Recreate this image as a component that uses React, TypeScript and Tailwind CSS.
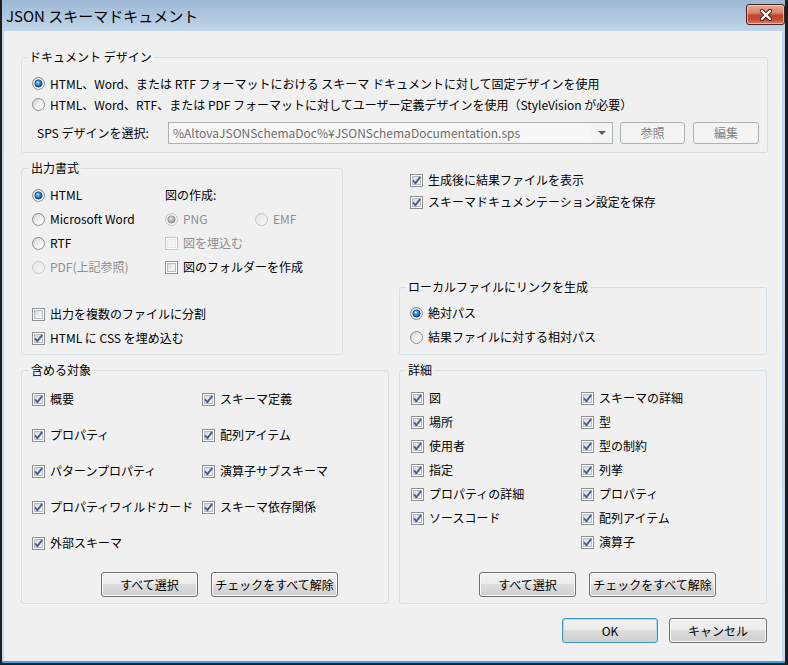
import React from 'react';

function Defs() {
  return (
    <svg width="0" height="0" className="absolute">
      <defs>
        <linearGradient id="rbg" x1="0" y1="0" x2="1" y2="1">
          <stop offset="0" stopColor="#cfcfcf" />
          <stop offset="0.6" stopColor="#f4f4f4" />
          <stop offset="1" stopColor="#ffffff" />
        </linearGradient>
        <linearGradient id="rbgd" x1="0" y1="0" x2="1" y2="1">
          <stop offset="0" stopColor="#e4e4e4" />
          <stop offset="1" stopColor="#f8f8f8" />
        </linearGradient>
        <radialGradient id="rdot" cx="0.4" cy="0.35" r="0.7">
          <stop offset="0" stopColor="#b8ecff" />
          <stop offset="0.35" stopColor="#3da2e6" />
          <stop offset="1" stopColor="#0b3f86" />
        </radialGradient>
        <radialGradient id="rdotd" cx="0.4" cy="0.35" r="0.7">
          <stop offset="0" stopColor="#e8e8e8" />
          <stop offset="1" stopColor="#8c8c8c" />
        </radialGradient>
        <linearGradient id="cbg" x1="0" y1="0" x2="1" y2="1">
          <stop offset="0" stopColor="#cfd1d4" />
          <stop offset="0.5" stopColor="#eeeeee" />
          <stop offset="1" stopColor="#fbfbfb" />
        </linearGradient>
      </defs>
    </svg>
  );
}

function Radio({ checked = false, disabled = false }: { checked?: boolean; disabled?: boolean }) {
  return (
    <svg width="13" height="13" viewBox="0 0 13 13" className="shrink-0">
      <circle cx="6.5" cy="6.5" r="6" fill={disabled ? 'url(#rbgd)' : 'url(#rbg)'} stroke={disabled ? '#c4c4c4' : '#8a8a8a'} />
      {checked && (
        <circle cx="6.5" cy="6.5" r="3.6" fill={disabled ? 'url(#rdotd)' : 'url(#rdot)'} stroke={disabled ? '#8a8a8a' : '#0d3470'} strokeWidth="0.8" />
      )}
    </svg>
  );
}

function Check({ checked = false, disabled = false }: { checked?: boolean; disabled?: boolean }) {
  return (
    <svg width="13" height="13" viewBox="0 0 13 13" className="shrink-0">
      <rect x="0.5" y="0.5" width="12" height="12" fill="#ffffff" stroke={disabled ? '#c7c7c7' : '#8e8f8f'} />
      <rect x="2.5" y="2.5" width="8" height="8" fill={disabled ? '#f4f4f4' : 'url(#cbg)'} stroke={disabled ? '#e6e6e6' : '#b9bcc0'} />
      {checked && (
        <path d="M3.1 6.4 L5.3 9.3 L10.2 2.9" fill="none" stroke="#475c95" strokeWidth="1.9" strokeLinejoin="round" />
      )}
    </svg>
  );
}

function RadioRow({ label, checked = false, disabled = false, h = 'h-[24px]' }: { label: string; checked?: boolean; disabled?: boolean; h?: string }) {
  return (
    <div className={`${h} flex items-center gap-[5px]`}>
      <Radio checked={checked} disabled={disabled} />
      <span className={disabled ? 'text-[#8f8f8f]' : 'text-black'}>{label}</span>
    </div>
  );
}

function CheckRow({ label, checked = false, disabled = false, h = 'h-[24px]' }: { label: string; checked?: boolean; disabled?: boolean; h?: string }) {
  return (
    <div className={`${h} flex items-center gap-[5px]`}>
      <Check checked={checked} disabled={disabled} />
      <span className={disabled ? 'text-[#8f8f8f]' : 'text-black'}>{label}</span>
    </div>
  );
}

function Btn({ children, w, primary = false, disabled = false }: { children: React.ReactNode; w: string; primary?: boolean; disabled?: boolean }) {
  if (disabled) {
    return (
      <div className={`${w} h-[22px] rounded-[3px] border border-[#adb2b5] bg-[#f4f4f4] text-[#838383] flex items-center justify-center`}>
        {children}
      </div>
    );
  }
  return (
    <div
      className={`${w} h-[25px] rounded-[3px] border ${primary ? 'border-[#3d95c8] shadow-[inset_0_0_0_1px_#9fe0f7]' : 'border-[#707070] shadow-[inset_0_0_0_1px_#fbfbfb]'} bg-[linear-gradient(#f2f2f2_0%,#ebebeb_50%,#dddddd_50%,#cfcfcf_100%)] flex items-center justify-center text-black`}
    >
      {children}
    </div>
  );
}

function Group({ title, className, legend, children }: { title: string; className: string; legend: string; children: React.ReactNode }) {
  return (
    <fieldset className={`border border-[#d5dfe5] rounded-[3px] ${className}`}>
      <legend className={`${legend} px-[2px] leading-[16px] text-black`}>{title}</legend>
      {children}
    </fieldset>
  );
}

export default function App() {
  return (
    <div className="w-[788px] h-[665px] overflow-hidden bg-[#1e1e1e] pl-[2px] pr-[3px] pb-[2px] flex flex-col font-['Noto_Sans_CJK_JP',sans-serif]">
      <Defs />
      <div className="flex-1 flex flex-col bg-[linear-gradient(#9db8d5_0px,#c0d5ea_31px,#c7daee_100%)] border-b-2 border-[#36a6dc]">
        {/* title bar */}
        <div className="h-[31px] flex items-center justify-between pl-[4px]">
          <span className="text-[15px] leading-[20px] text-black">JSON スキーマドキュメント</span>
          <div className="w-[39px] h-[21px] mb-[2px] rounded-[3px] border border-[#4b2320] bg-[linear-gradient(#e6a895_0%,#d98670_40%,#c4432d_55%,#c6503a_80%,#dc8a6e_100%)] shadow-[inset_0_0_0_1px_rgba(255,230,220,0.55)] flex items-center justify-center">
            <svg width="14" height="12" viewBox="0 0 14 12">
              <path d="M3 2 L11 10 M11 2 L3 10" stroke="#4a1c16" strokeWidth="4.2" strokeLinecap="round" />
              <path d="M3 2 L11 10 M11 2 L3 10" stroke="#ffffff" strokeWidth="2.4" strokeLinecap="round" />
            </svg>
          </div>
        </div>
        {/* body */}
        <div className="flex-1 ml-[2px] mr-[3px] bg-[#f0f0f0] pl-[17px] pr-[15px] flex flex-col text-[12px] leading-[16px] text-black">
          {/* Document design */}
          <Group title="ドキュメント デザイン" legend="-ml-[5px]" className="mt-[18px] pl-[10px] pr-[8px] pt-[8px] pb-[8px]">
            <RadioRow h="h-[21px]" checked label="HTML、Word、または RTF フォーマットにおける スキーマ ドキュメントに対して固定デザインを使用" />
            <RadioRow h="h-[21px]" label="HTML、Word、RTF、または PDF フォーマットに対してユーザー定義デザインを使用（StyleVision が必要）" />
            <div className="mt-[7px] flex items-center">
              <span className="w-[136px] pl-[5px]">SPS デザインを選択:</span>
              <div className="w-[445px] h-[22px] border border-[#adb2b5] bg-[#f4f4f4] flex items-center">
                <span className="flex-1 pl-[3px] text-[#6d6d6d] bg-[#f7f7f7] mx-[1px] h-[18px] leading-[18px]">%AltovaJSONSchemaDoc%¥JSONSchemaDocumentation.sps</span>
                <div className="w-[20px] flex items-center justify-center">
                  <svg width="8" height="4" viewBox="0 0 8 4"><path d="M0 0 H8 L4 4 Z" fill="#5a5a5a" /></svg>
                </div>
              </div>
              <div className="ml-[7px]"><Btn w="w-[65px]" disabled>参照</Btn></div>
              <div className="ml-[8px]"><Btn w="w-[66px]" disabled>編集</Btn></div>
            </div>
          </Group>

          {/* row 2 */}
          <div className="mt-[7px] flex">
            <Group title="出力書式" legend="-ml-[3px]" className="w-[322px] pl-[10px] pt-[7px] pb-[4px]">
              <div className="flex">
                <div className="w-[133px] flex flex-col">
                  <RadioRow checked label="HTML" />
                  <RadioRow label="Microsoft Word" />
                  <RadioRow label="RTF" />
                  <RadioRow disabled label="PDF(上記参照)" />
                </div>
                <div className="flex flex-col">
                  <div className="h-[24px] flex items-center">図の作成:</div>
                  <div className="h-[24px] flex items-center">
                    <div className="w-[90px]"><RadioRow checked disabled label="PNG" /></div>
                    <RadioRow disabled label="EMF" />
                  </div>
                  <CheckRow disabled label="図を埋込む" />
                  <CheckRow label="図のフォルダーを作成" />
                </div>
              </div>
              <div className="mt-[23px]">
                <CheckRow label="出力を複数のファイルに分割" />
                <CheckRow checked label="HTML に CSS を埋め込む" />
              </div>
            </Group>
            <div className="ml-[56px] flex-1 flex flex-col">
              <div className="pt-[9px] pl-[11px]">
                <CheckRow h="h-[22px]" checked label="生成後に結果ファイルを表示" />
                <CheckRow h="h-[22px]" checked label="スキーマドキュメンテーション設定を保存" />
              </div>
              <Group title="ローカルファイルにリンクを生成" legend="-ml-[4px]" className="mt-auto pl-[10px] pt-[6px] pb-[5px]">
                <RadioRow checked label="絶対パス" />
                <RadioRow label="結果ファイルに対する相対パス" />
              </Group>
            </div>
          </div>

          {/* row 3 */}
          <div className="mt-[7px] flex gap-[10px]">
            <Group title="含める対象" legend="-ml-[3px]" className="w-[368px] h-[242px] flex flex-col pl-[10px] pt-[9px] pb-[6px]">
              <div className="grid grid-cols-[170px_auto] gap-y-[12px]">
                <CheckRow checked label="概要" />
                <CheckRow checked label="スキーマ定義" />
                <CheckRow checked label="プロパティ" />
                <CheckRow checked label="配列アイテム" />
                <CheckRow checked label="パターンプロパティ" />
                <CheckRow checked label="演算子サブスキーマ" />
                <CheckRow checked label="プロパティワイルドカード" />
                <CheckRow checked label="スキーマ依存関係" />
                <CheckRow checked label="外部スキーマ" />
              </div>
              <div className="mt-auto flex justify-end gap-[13px] pr-[50px]">
                <Btn w="w-[97px]">すべて選択</Btn>
                <Btn w="w-[127px]">チェックをすべて解除</Btn>
              </div>
            </Group>
            <Group title="詳細" legend="-ml-[5px]" className="flex-1 h-[242px] flex flex-col pl-[11px] pt-[8px] pb-[6px]">
              <div className="flex">
                <div className="w-[170px] flex flex-col">
                  <CheckRow checked label="図" />
                  <CheckRow checked label="場所" />
                  <CheckRow checked label="使用者" />
                  <CheckRow checked label="指定" />
                  <CheckRow checked label="プロパティの詳細" />
                  <CheckRow checked label="ソースコード" />
                </div>
                <div className="flex flex-col">
                  <CheckRow checked label="スキーマの詳細" />
                  <CheckRow checked label="型" />
                  <CheckRow checked label="型の制約" />
                  <CheckRow checked label="列挙" />
                  <CheckRow checked label="プロパティ" />
                  <CheckRow checked label="配列アイテム" />
                  <CheckRow checked label="演算子" />
                </div>
              </div>
              <div className="mt-auto flex justify-end gap-[13px] pr-[50px]">
                <Btn w="w-[97px]">すべて選択</Btn>
                <Btn w="w-[127px]">チェックをすべて解除</Btn>
              </div>
            </Group>
          </div>

          {/* dialog buttons */}
          <div className="mt-[14px] flex justify-end gap-[11px]">
            <Btn w="w-[96px]" primary>OK</Btn>
            <Btn w="w-[98px]">キャンセル</Btn>
          </div>
        </div>
      </div>
    </div>
  );
}
